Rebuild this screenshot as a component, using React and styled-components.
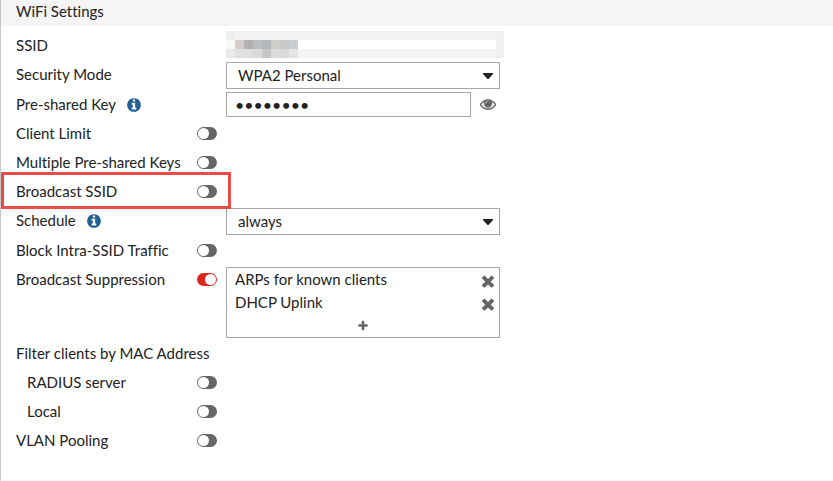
import React, { useId, useState } from "react"
import styled, { createGlobalStyle, css } from "styled-components"

const colors = {
  text: "#222",
  icon: "#666",
  border: "#a6a6a6",
  bar: "#f5f5f5",
  info: "#236192",
  on: "#da291c",
  highlight: "#e84c47",
}

const GlobalStyle = createGlobalStyle`
  * {
    box-sizing: border-box;
  }
  body {
    margin: 0;
    background: #fff;
    color: ${colors.text};
    font-family: Lato, "Liberation Sans", sans-serif;
    font-size: 15px;
    font-variant-ligatures: none;
    line-height: 23px;
  }
  input,
  select,
  button {
    font: inherit;
    color: inherit;
  }
`

const Panel = styled.main`
  border-left: 1px solid #c8c8c8;
  border-bottom: 1px solid ${colors.bar};
`
const Title = styled.h2`
  margin: 0;
  padding: 0 15px 3px;
  background: ${colors.bar};
  font-size: 15px;
  font-weight: normal;
`
const Form = styled.form`
  padding: 5px 0 25px;
`
const Row = styled.div`
  position: relative;
  display: flex;
  align-items: flex-start;
  min-height: 29px;
  padding: 0 15px;
`
const Highlight = styled.div`
  position: absolute;
  z-index: 1;
  top: -5px;
  bottom: -3px;
  left: 0;
  width: 230px;
  border: 3px solid ${colors.highlight};
  pointer-events: none;
`
const LabelCell = styled.div`
  display: flex;
  align-items: center;
  flex: 0 0 181px;
  height: 29px;
  padding-left: ${p => (p.$indent ? "11px" : "0")};
  white-space: nowrap;
`
const InfoButton = styled.button`
  display: flex;
  margin-left: 10px;
  padding: 0;
  border: 0;
  background: none;
  color: ${colors.info};
`
const ToggleCell = styled.div`
  display: flex;
  align-items: center;
  flex: 0 0 29px;
  height: 29px;
`
const Toggle = styled.input`
  appearance: none;
  display: flex;
  width: 20px;
  height: 13px;
  margin: 0;
  padding: 1px;
  border-radius: 7px;
  background: ${colors.icon};
  &::before {
    content: "";
    width: 11px;
    height: 11px;
    border-radius: 50%;
    background: #fff;
  }
  &:checked {
    justify-content: flex-end;
    background: ${colors.on};
  }
`
const Field = styled.div`
  display: flex;
  align-items: center;
  flex: 0 1 274px;
  min-width: 0;
`
const box = css`
  width: 100%;
  border: 1px solid ${colors.border};
  border-radius: 0;
  background: #fff;
`
const SelectWrap = styled.div`
  position: relative;
  width: 100%;
  margin: 2px 0 1px;
  svg {
    position: absolute;
    top: 11px;
    right: 7px;
    pointer-events: none;
  }
`
const SelectBox = styled.select`
  ${box}
  appearance: none;
  display: block;
  height: 27px;
  padding: 0 24px 0 11px;
`
const KeyInput = styled.input`
  ${box}
  flex: 1;
  min-width: 0;
  height: 25px;
  margin: 2px 0;
  padding: 0 8px;
  &[type="password"] {
    font-size: 16px;
  }
`
const IconButton = styled.button`
  display: flex;
  justify-content: center;
  padding: 0;
  border: 0;
  background: none;
  color: ${colors.icon};
`
const EyeButton = styled(IconButton)`
  margin: 0 4px 2px 9px;
`
const List = styled.ul`
  ${box}
  margin: 2px 0 1px;
  padding: 0;
  list-style: none;
`
const Item = styled.li`
  display: flex;
  align-items: center;
  justify-content: space-between;
  height: 23px;
  padding: 0 2px 0 8px;
  ${IconButton} {
    padding-top: 3px;
  }
`
const AddItem = styled.li`
  display: flex;
  align-items: center;
  justify-content: center;
  height: 23px;
`

const paths = {
  info:
    "M1152 1376v-160q0-14-9-23t-23-9h-96v-512q0-14-9-23t-23-9h-320q-14 0-23 9t-9 23v160q0 14 9 23t23 9h96v320h-96q-14 0-23 9t-9 23v160q0 14 9 23t23 9h448q14 0 23-9t9-23zm-128-896v-160q0-14-9-23t-23-9h-192q-14 0-23 9t-9 23v160q0 14 9 23t23 9h192q14 0 23-9t9-23zm640 416q0 209-103 385.5t-279.5 279.5-385.5 103-385.5-103-279.5-279.5-103-385.5 103-385.5 279.5-279.5 385.5-103 385.5 103 279.5 279.5 103 385.5z",
  eye:
    "M1664 960q-152-236-381-353 61 104 61 225 0 185-131.5 316.5t-316.5 131.5-316.5-131.5-131.5-316.5q0-121 61-225-229 117-381 353 133 205 333.5 326.5t434.5 121.5 434.5-121.5 333.5-326.5zm-720-384q0-20-14-34t-34-14q-125 0-214.5 89.5t-89.5 214.5q0 20 14 34t34 14 34-14 14-34q0-86 61-147t147-61q20 0 34-14t14-34zm848 384q0 34-20 69-140 230-376.5 368.5t-499.5 138.5-499.5-139-376.5-368q-20-35-20-69t20-69q140-229 376.5-368t499.5-139 499.5 139 376.5 368q20 35 20 69z",
  times:
    "M1490 1322q0 40-28 68l-136 136q-28 28-68 28t-68-28l-294-294-294 294q-28 28-68 28t-68-28l-136-136q-28-28-28-68t28-68l294-294-294-294q-28-28-28-68t28-68l136-136q28-28 68-28t68 28l294 294 294-294q28-28 68-28t68 28l136 136q28 28 28 68t-28 68l-294 294 294 294q28 28 28 68z",
  plus:
    "M1600 736v192q0 40-28 68t-68 28h-416v416q0 40-28 68t-68 28h-192q-40 0-68-28t-28-68v-416h-416q-40 0-68-28t-28-68v-192q0-40 28-68t68-28h416v-416q0-40 28-68t68-28h192q40 0 68 28t28 68v416h416q40 0 68 28t28 68z",
}

const Icon = ({ name, size }) => (
  <svg width={size} height={size} viewBox="0 0 1792 1792" aria-hidden="true">
    <path
      fill="currentColor"
      stroke={name === "eye" ? "currentColor" : "none"}
      strokeWidth="50"
      d={paths[name]}
    />
  </svg>
)

// the network name is masked with coarse grey tiles
const tiles = [
  ["#eeeeee", "#f3f3f3", "#f3f3f3", "#f3f3f3", "#f3f3f3", "#f3f3f3", "#f3f3f3", "#f3f3f3"],
  ["#f8f8f8", "#d2cdca", "#b2b0b1", "#bcbdbf", "#b5b9bc", "#cdcec9", "#c7c9c8", "#c9ced1"],
  ["#e9e9e9", "#e0e0e0", "#e0e0e1", "#dcd9d8", "#c5c6c8", "#dadddc", "#dbd9d7", "#e2e4e6"],
]

const Mask = styled.svg`
  flex: none;
  display: block;
`

const MaskedName = () => (
  <Mask width="278" height="27" shapeRendering="crispEdges" role="img" aria-label="Hidden">
    <rect width="278" height="9" fill="#f3f3f3" />
    <rect y="18" width="278" height="9" fill="#f3f3f3" />
    <rect x="270" width="8" height="27" fill="#f1f1f1" />
    {tiles.map((line, y) =>
      line.map((fill, x) => (
        <rect key={`${x}-${y}`} x={x * 9} y={y * 9} width="9" height="9" fill={fill} />
      ))
    )}
  </Mask>
)

const Select = ({ id, options }) => (
  <SelectWrap>
    <SelectBox id={id}>
      {options.map(o => (
        <option key={o}>{o}</option>
      ))}
    </SelectBox>
    <svg width="10" height="6" viewBox="0 0 10 6" aria-hidden="true">
      <path fill={colors.text} d="M0 0h10v1L5.500 6h-1L0 1z" />
    </svg>
  </SelectWrap>
)

const Setting = ({ label, info, indent, toggle, on, highlight, children }) => {
  const id = useId()
  return (
    <Row>
      {highlight && <Highlight />}
      <LabelCell $indent={indent}>
        {toggle || typeof children === "function" ? (
          <label htmlFor={id}>{label}</label>
        ) : (
          <span>{label}</span>
        )}
        {info && (
          <InfoButton type="button" aria-label={`About ${label}`}>
            <Icon name="info" size={16} />
          </InfoButton>
        )}
      </LabelCell>
      <ToggleCell>
        {toggle && <Toggle type="checkbox" role="switch" id={id} defaultChecked={on} />}
      </ToggleCell>
      <Field>{typeof children === "function" ? children(id) : children}</Field>
    </Row>
  )
}

const App = () => {
  const [visible, setVisible] = useState(false)
  const [packets, setPackets] = useState(["ARPs for known clients", "DHCP Uplink"])

  return (
    <>
      <GlobalStyle />
      <Panel>
        <Title>WiFi Settings</Title>
        <Form>
          <Setting label="SSID">
            <MaskedName />
          </Setting>
          <Setting label="Security Mode">
            {id => <Select id={id} options={["WPA2 Personal", "WPA2 Enterprise"]} />}
          </Setting>
          <Setting label="Pre-shared Key" info>
            {id => (
              <>
                <KeyInput
                  id={id}
                  type={visible ? "text" : "password"}
                  defaultValue="password"
                  autoComplete="off"
                />
                <EyeButton type="button" aria-label="Show key" onClick={() => setVisible(!visible)}>
                  <Icon name="eye" size={16} />
                </EyeButton>
              </>
            )}
          </Setting>
          <Setting label="Client Limit" toggle />
          <Setting label="Multiple Pre-shared Keys" toggle />
          <Setting label="Broadcast SSID" toggle highlight />
          <Setting label="Schedule" info>
            {id => <Select id={id} options={["always", "none"]} />}
          </Setting>
          <Setting label="Block Intra-SSID Traffic" toggle />
          <Setting label="Broadcast Suppression" toggle on>
            <List>
              {packets.map(name => (
                <Item key={name}>
                  {name}
                  <IconButton
                    type="button"
                    aria-label={`Remove ${name}`}
                    onClick={() => setPackets(packets.filter(p => p !== name))}
                  >
                    <Icon name="times" size={18} />
                  </IconButton>
                </Item>
              ))}
              <AddItem>
                <IconButton type="button" aria-label="Add">
                  <Icon name="plus" size={12} />
                </IconButton>
              </AddItem>
            </List>
          </Setting>
          <Setting label="Filter clients by MAC Address" />
          <Setting label="RADIUS server" toggle indent />
          <Setting label="Local" toggle indent />
          <Setting label="VLAN Pooling" toggle />
        </Form>
      </Panel>
    </>
  )
}

export default App
